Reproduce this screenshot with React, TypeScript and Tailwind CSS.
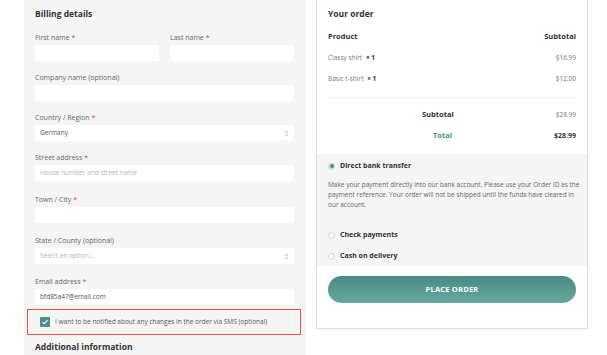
import React from 'react'

const font = { fontFamily: '"Open Sans", "Liberation Sans", sans-serif' }

function Label({ text, required }: { text: string; required?: boolean }) {
  return (
    <div className="h-[10px] text-[7px] leading-[10px] text-[#666]">
      {text}
      {required && <span className="ml-[2px] text-[#e2401c]">*</span>}
    </div>
  )
}

function Input({ value, placeholder, select }: { value?: string; placeholder?: string; select?: boolean }) {
  return (
    <div className="mt-[2px] flex h-[16px] items-center justify-between bg-white pl-[5px] pr-[5px] text-[6.5px]">
      {value ? (
        <span className="text-[#555]">{value}</span>
      ) : (
        <span className="text-[#b5b5b5]">{placeholder}</span>
      )}
      {select && (
        <svg width="5" height="7" viewBox="0 0 5 7" className="text-[#888]">
          <path d="M1 2.6 L2.5 1.2 L4 2.6 M1 4.4 L2.5 5.8 L4 4.4" fill="none" stroke="currentColor" strokeWidth="0.7" />
        </svg>
      )}
    </div>
  )
}

function Field({ label, required, mb, ...rest }: { label: string; required?: boolean; mb: string; value?: string; placeholder?: string; select?: boolean }) {
  return (
    <div className={mb}>
      <Label text={label} required={required} />
      <Input {...rest} />
    </div>
  )
}

function Radio({ checked }: { checked?: boolean }) {
  return checked ? (
    <span className="flex h-[7px] w-[7px] items-center justify-center rounded-full bg-[#c9e2de]">
      <span className="h-[4px] w-[4px] rounded-full bg-[#4a8f88]" />
    </span>
  ) : (
    <span className="h-[7px] w-[7px] rounded-full border border-[#cfcfcf] bg-white" />
  )
}

export default function App() {
  return (
    <div className="flex h-[355px] w-[607px] overflow-hidden bg-white pl-[24px]" style={font}>
      {/* Billing */}
      <div className="w-[282px] shrink-0 bg-[#f5f5f5] pl-[11px] pr-[12px] pt-[8px]">
        <div className="h-[12px] text-[8.5px] font-bold leading-[12px] text-[#333]">Billing details</div>
        <div className="mt-[13px] mb-[12px] flex gap-[11px]">
          <div className="flex-1">
            <Label text="First name" required />
            <Input />
          </div>
          <div className="flex-1">
            <Label text="Last name" required />
            <Input />
          </div>
        </div>
        <Field label="Company name (optional)" mb="mb-[12px]" />
        <Field label="Country / Region" required value="Germany" select mb="mb-[12px]" />
        <Field label="Street address" required placeholder="House number and street name" mb="mb-[14px]" />
        <Field label="Town / City" required mb="mb-[13px]" />
        <Field label="State / County (optional)" placeholder="Select an option..." select mb="mb-[13px]" />
        <Field label="Email address" required value="bfd85a47@email.com" mb="mb-[4px]" />
        <div className="-ml-[8px] -mr-[7px] flex h-[26px] items-center border-[1.5px] border-[#e8533f] pl-[12px]">
          <span className="flex h-[10px] w-[10px] items-center justify-center rounded-[1px] bg-[#4a8f88]">
            <svg width="8" height="8" viewBox="0 0 8 8">
              <path d="M1.5 4.2 L3.2 5.8 L6.6 2.2" fill="none" stroke="white" strokeWidth="1.1" />
            </svg>
          </span>
          <span className="ml-[5px] text-[6.5px] text-[#555]">
            I want to be notified about any changes in the order via SMS (optional)
          </span>
        </div>
        <div className="mt-[6px] h-[12px] text-[8.5px] font-bold leading-[12px] text-[#333]">
          Additional information
        </div>
      </div>

      {/* Order */}
      <div className="ml-[10px] flex h-[329px] w-[272px] shrink-0 flex-col border-x border-b border-[#dcdcdc]">
        <div className="px-[11px] pt-[8px]">
          <div className="h-[12px] text-[8.5px] font-bold leading-[12px] text-[#333]">Your order</div>
          <div className="mt-[11px] flex h-[12px] items-center justify-between text-[7.5px] font-bold text-[#333]">
            <span>Product</span>
            <span>Subtotal</span>
          </div>
          <div className="mt-[9px] flex h-[12px] items-center justify-between text-[6.5px] text-[#777]">
            <span>
              Classy shirt <b className="ml-[2px] text-[#333]">× 1</b>
            </span>
            <span>$16.99</span>
          </div>
          <div className="mt-[9px] flex h-[12px] items-center justify-between text-[6.5px] text-[#777]">
            <span>
              Basic t-shirt <b className="ml-[2px] text-[#333]">× 1</b>
            </span>
            <span>$12.00</span>
          </div>
          <div className="mt-[12px] h-px bg-[#eeeeee]" />
          <div className="mt-[11px] flex h-[12px] items-center text-[6.5px]">
            <span className="flex-1 pr-[102px] text-right text-[7.5px] font-bold text-[#333]">Subtotal</span>
            <span className="text-[#777]">$28.99</span>
          </div>
          <div className="mt-[9px] flex h-[12px] items-center text-[7px]">
            <span className="flex-1 pr-[102px] text-right text-[7.5px] font-bold text-[#4a8f88]">Total</span>
            <span className="font-bold text-[#333]">$28.99</span>
          </div>
        </div>

        <div className="mt-[12px] h-[112px] bg-[#f5f5f5] px-[11px] pt-[6px]">
          <div className="flex h-[12px] items-center gap-[5px]">
            <Radio checked />
            <span className="text-[7px] font-bold text-[#333]">Direct bank transfer</span>
          </div>
          <div className="mt-[8px] text-[6.5px] leading-[10px] text-[#666]">
            <div className="whitespace-nowrap">Make your payment directly into our bank account. Please use your Order ID as the</div>
            <div className="whitespace-nowrap">payment reference. Your order will not be shipped until the funds have cleared in</div>
            <div>our account.</div>
          </div>
          <div className="mt-[19px] flex h-[12px] items-center gap-[5px]">
            <Radio />
            <span className="text-[7px] font-bold text-[#333]">Check payments</span>
          </div>
          <div className="mt-[9px] flex h-[12px] items-center gap-[5px]">
            <Radio />
            <span className="text-[7px] font-bold text-[#333]">Cash on delivery</span>
          </div>
        </div>

        <div className="px-[11px] pt-[10px]">
          <div className="flex h-[27px] items-center justify-center rounded-full bg-gradient-to-b from-[#4a8a84] to-[#66a8a0] text-[7.5px] font-bold tracking-[0.2px] text-white">
            PLACE ORDER
          </div>
        </div>
      </div>
    </div>
  )
}
